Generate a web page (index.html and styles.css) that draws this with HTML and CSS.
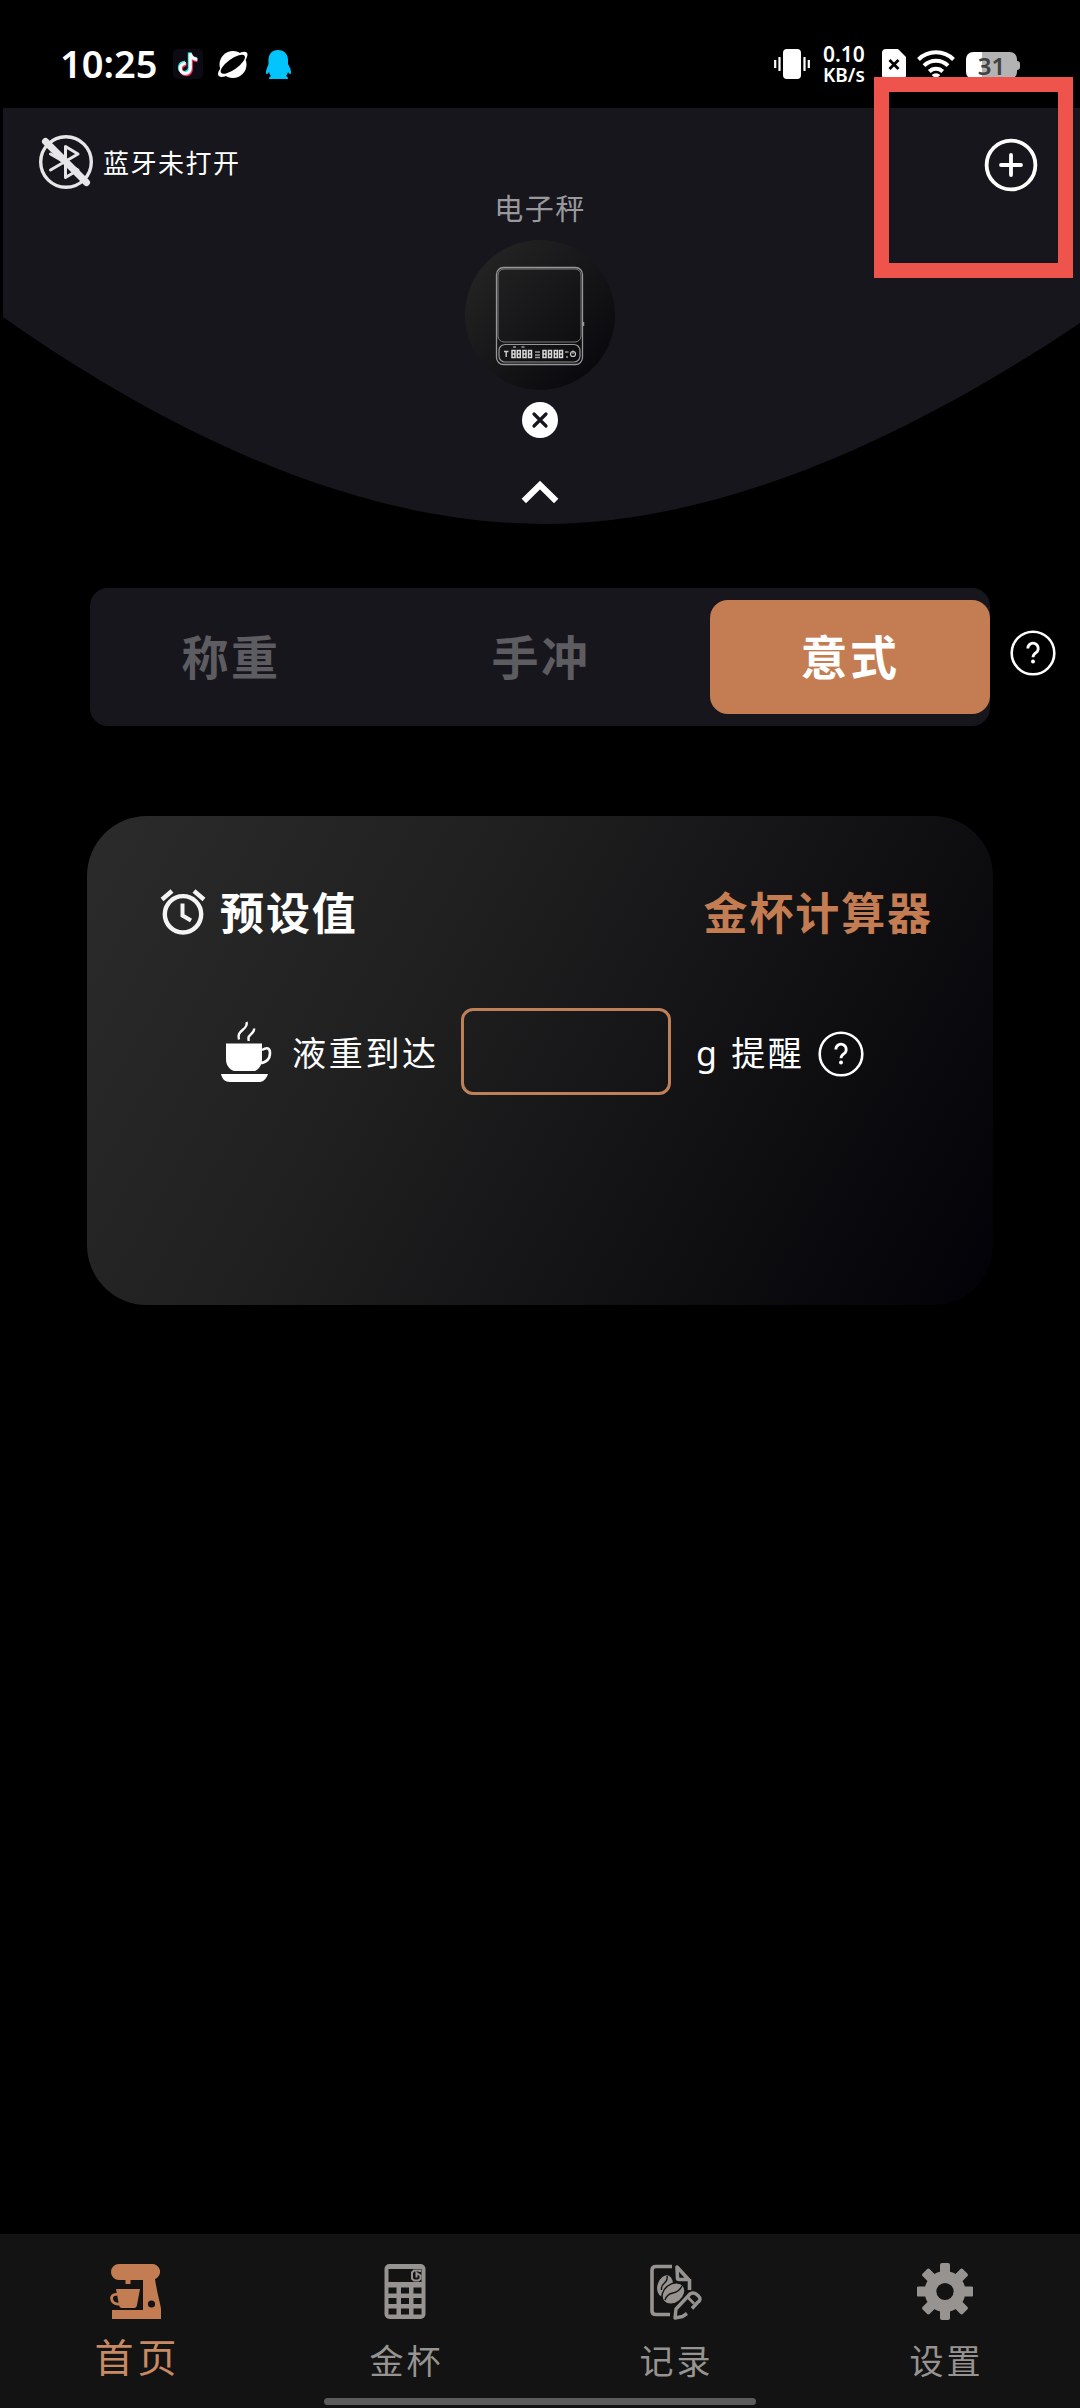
FILE: index.html
```html
<!DOCTYPE html>
<html lang="zh-CN">
<head>
<meta charset="UTF-8">
<title>电子秤</title>
<link rel="stylesheet" href="styles.css">
</head>
<body>
<div class="screen">
  <div class="status">
    <div class="status-left">
      <span class="clock">10:25</span>
      <svg class="app-icon" width="30" height="30" viewBox="0 0 30 30"><rect width="30" height="30" rx="5" fill="#0c0b14"/><g fill="none" stroke-width="3.6"><path d="M12 13.5a5 5 0 1 0 4.6 5V3.5c.6 3.800 3 6 7 6.400" stroke="#25e6e0"/><path d="M13.500 15.500a5 5 0 1 0 4.600 4.500V5.500c.6 3.800 3 5.500 6.400 6" stroke="#f5325b"/><path d="M12.700 14.500a5 5 0 1 0 4.600 5V4.500c.6 3.800 3 5.500 7 6" stroke="#fff" stroke-width="3"/></g></svg>
      <svg class="planet" width="32" height="30" viewBox="0 0 32 30"><circle cx="16" cy="15.500" r="13.500" fill="#fff"/><path d="M21 5C26 1.500 31 2 30.500 6C30 9 28.500 11 27 13ZM11 26C6 29 .5 28.500 1 24.500C1.500 21.500 3 20 4.500 18Z" fill="#fff"/><ellipse cx="15.800" cy="15.200" rx="14.500" ry="5.300" transform="rotate(-36 15.800 15.200)" fill="#000"/></svg>
      <svg class="penguin" width="28" height="30" viewBox="0 0 28 30"><path fill="#00c4fb" d="M14 0c6 0 10 4 10 10v4l2 4c1 2.500 1.400 5 .6 6-.7.500-1.600-.4-2.600-2-.5 2-1.500 3.400-2 4 1.600.7 2 1.500 2 3H5c0-1.500.5-2.300 2-3-.8-.8-1.600-2-2-4-1 1.600-2 2.500-2.600 2-.8-1-.4-3.500.6-6l1.500-4v-4C4.500 4 8 0 14 0z"/></svg>
    </div>
    <div class="status-right">
      <svg class="vibrate" width="36" height="30" viewBox="0 0 36 30"><rect x="9" y="0" width="18" height="30" rx="4" fill="#fff"/><path d="M5.500 8v14M1.200 11v8M30.500 8v14M34.800 11v8" stroke="#fff" stroke-width="2.200"/></svg>
      <div class="speed"><span>0.10</span><span class="unit">KB/s</span></div>
      <svg class="sim" width="24" height="30" viewBox="0 0 24 30"><path d="M4 0h12l8 8v18a4 4 0 0 1-4 4H4a4 4 0 0 1-4-4V4a4 4 0 0 1 4-4z" fill="#fff"/><path d="M7.500 11l9 9M16.500 11l-9 9" stroke="#000" stroke-width="2.800"/></svg>
      <svg class="wifi" width="38" height="29" viewBox="0 0 38 29"><g fill="none" stroke="#fff" stroke-width="4"><path d="M1.500 9.500a25 25 0 0 1 35 0"/><path d="M7 15.700a17 17 0 0 1 24 0"/><path d="M12.300 21.500a9.500 9.500 0 0 1 13.400 0"/></g><path d="M14.700 25a6.200 6.200 0 0 1 8.600 0L19 29z" fill="#fff"/></svg>
      <div class="battery"><span>31</span></div>
    </div>
  </div>

  <header class="header">
    <svg class="header-bg" width="1080" height="420" viewBox="0 0 1080 420"><path d="M3 0H1080V215C870 356 690 416 545 416C395 416 215 358 3 209Z" fill="#17161c"/></svg>
    <div class="bluetooth">
      <svg width="54" height="54" viewBox="0 0 54 54"><g fill="none" stroke="#e6e6e8" stroke-linejoin="round" stroke-linecap="round"><circle cx="27" cy="27" r="25.300" stroke-width="3.400"/><path d="M11.500 35L39 19 26.500 11.500V42.500L39 35 11.500 19" stroke-width="3"/><path d="M6.500 6.500L47.500 47.500" stroke-width="7"/></g></svg>
      <span>蓝牙未打开</span>
    </div>
    <svg class="add" width="54" height="54" viewBox="0 0 54 54"><g fill="none" stroke="#fff" stroke-width="3.800" stroke-linecap="round"><circle cx="27" cy="27" r="24.400"/><path d="M27 17V37M17 27H37"/></g></svg>
    <div class="device">
      <span class="device-name">电子秤</span>
      <div class="device-pic">
        <svg width="90" height="100" viewBox="0 0 90 100"><g fill="none" stroke="#969698"><rect x="1.500" y="1.500" width="86" height="97" rx="7" stroke-width="1.300"/><rect x="3" y="3" width="83" height="73" rx="6" stroke-width=".8"/><rect x="4" y="78.500" width="81" height="17.500" rx="6" stroke-width="1.200"/></g><path d="M88.500 56v4" stroke="#969698" stroke-width="1.500"/><path d="M9 85.500h4.500M11.200 85.500V91" stroke="#ccc" stroke-width="1.400"/><g fill="none" stroke="#d8d8d8" stroke-width="1.500"><path d="M17 84.500h3v7h-3zM17 88h3M22.300 84.500h3v7h-3zM22.300 88h3M28 84.500h3v7h-3zM28 88h3M33.500 84.500h3v7h-3zM33.500 88h3M48 84.500h3v7h-3zM48 88h3M53.500 84.500h3v7h-3zM53.500 88h3M59.300 84.500h3v7h-3zM59.300 88h3M64.500 84.500h3v7h-3zM64.500 88h3"/></g><path d="M18 81h3M26.500 81h3M40 86h5M40 89h5M40 91.500h5M70 86h3.500M71 91h2" stroke="#999" stroke-width="1.300"/><circle cx="78" cy="88" r="2.500" fill="none" stroke="#ccc" stroke-width="1.200"/><path d="M78 84.500v3.500" stroke="#ccc"/></svg>
      </div>
      <svg class="device-x" width="36" height="36" viewBox="0 0 36 36"><circle cx="18" cy="18" r="18" fill="#fff"/><path d="M12 12L24 24M24 12L12 24" stroke="#17161c" stroke-width="3.200" stroke-linecap="round"/></svg>
      <svg class="chevron" width="38" height="24" viewBox="0 0 38 24"><path d="M2.800 21L19 5 35.200 21" fill="none" stroke="#fff" stroke-width="6.200"/></svg>
    </div>
  </header>

  <div class="modes">
    <div class="tabs"><span class="tab">称重</span><span class="tab">手冲</span><span class="tab active">意式</span></div>
    <svg class="help" width="46" height="46" viewBox="0 0 46 46"><g fill="none" stroke="#fff"><circle cx="23" cy="23" r="21.300" stroke-width="2.600"/><path d="M17.800 18.500a5.200 5.200 0 1 1 8.200 4.200c-2 1.400-3 2.300-3 4.600" stroke-width="2.800"/></g><circle cx="23" cy="31.500" r="2" fill="#fff"/></svg>
  </div>

  <main class="card">
    <div class="card-head">
      <svg width="46" height="46" viewBox="0 0 46 46"><g fill="none" stroke="#f4f4f4"><circle cx="23" cy="25.300" r="18.200" stroke-width="4.400"/><path d="M2 10.500L12 2M34 2L44 10.500" stroke-width="4.400"/><path d="M22.500 14.500V26.500L31 31.500" stroke-width="4"/></g></svg>
      <h1>预设值</h1>
      <a class="calc">金杯计算器</a>
    </div>
    <div class="card-row">
      <svg class="cup" width="52" height="62" viewBox="0 0 52 62"><path d="M6 22.500H42V38c0 6-3 10-7 12H14C9 48 6 44 6 38ZM1 53H48C46 58.500 43 61 39 61H10C5 61 2 58 1 53Z" fill="#fff"/><path d="M42 29c5-3 8-2 8 3 0 6-4 10-10 10" fill="none" stroke="#fff" stroke-width="2.600"/><path d="M26.500 1c2 6-6 8-7.500 12-.8 2-.4 4 0 5.500M34 7.500c1 4-5 6-5.500 9-.2 1.200 0 2.200.3 3.500" fill="none" stroke="#fff" stroke-width="2.400"/></svg>
      <span class="reach">液重到达</span>
      <div class="field"></div>
      <span class="remind">g 提醒</span>
      <svg class="row-help" width="46" height="46" viewBox="0 0 46 46"><g fill="none" stroke="#fff"><circle cx="23" cy="23" r="21.300" stroke-width="2.600"/><path d="M17.800 18.500a5.200 5.200 0 1 1 8.200 4.200c-2 1.400-3 2.300-3 4.600" stroke-width="2.800"/></g><circle cx="23" cy="31.500" r="2" fill="#fff"/></svg>
    </div>
  </main>

  <nav class="nav">
    <div class="nav-item on">
      <svg width="56" height="60" viewBox="0 0 56 60"><g fill="#c47d52"><path d="M12 2H44a7.800 7.800 0 0 1 4 15C50 31 54 44 54 47V57H5V48H36V18H12A8 8 0 0 1 12 2ZM18.500 18H23.500V22H18.500Z"/><path d="M9 27H33L30 43Q29.500 46 27 46H15Q12.500 46 12 43Z"/></g><path d="M10 32.500C2 31 3 43 12 42" fill="none" stroke="#c47d52" stroke-width="2.800"/><circle cx="44.500" cy="42" r="3.600" fill="#131313"/></svg>
      <span>首页</span>
    </div>
    <div class="nav-item">
      <svg width="56" height="60" viewBox="0 0 56 60"><rect x="7.500" y="2" width="41" height="55" rx="5" fill="#969391"/><path d="M11.500 7H44.500V20H11.500ZM11.500 25.500h8v6h-8zM24 25.500h8v6h-8zM36.500 25.500h8v6h-8zM11.500 36h8v6h-8zM24 36h8v6h-8zM36.500 36h8v6h-8zM11.500 46.500h8v6h-8zM24 46.500h8v6h-8zM36.500 46.500h8v6h-8z" fill="#131313"/><path d="M43 10V8.500H37L35 10.500V16.500L37 18.500H41.500L43.500 16.500V13.500L39.500 11V15.500" fill="none" stroke="#969391" stroke-width="2"/></svg>
      <span>金杯</span>
    </div>
    <div class="nav-item">
      <svg width="56" height="60" viewBox="0 0 56 60"><g fill="none" stroke="#969391" stroke-width="3.600" stroke-linejoin="round"><path d="M25 4.500H9Q5 4.500 5 8V49Q5 52.500 9 52.500H23"/><path d="M30 5L41.500 17.500H32Q30.500 17.500 30.500 16ZM42.500 17V28" stroke-width="3.600"/><path d="M40 51.500L35.500 54.500 28 56 29 47 43 32Q47 29.500 51 33.500T51 40L45 46.500" stroke-width="3.400"/><path d="M40.500 35L47 41.500" stroke-width="2.600"/></g><g fill="#969391"><ellipse cx="18" cy="24" rx="7.500" ry="11" transform="rotate(18 18 24)"/><ellipse cx="26.500" cy="31.500" rx="12.500" ry="9.500" transform="rotate(-38 26.500 31.500)" stroke="#131313" stroke-width="1.500"/></g><path d="M18 38Q20 32 26 31T35 24M14.500 28Q14 24 17.500 21T20 14" fill="none" stroke="#131313" stroke-width="1.400"/></svg>
      <span>记录</span>
    </div>
    <div class="nav-item">
      <svg width="56" height="60" viewBox="0 0 56 60"><g fill="#969391"><circle cx="28" cy="29.500" r="20.500"/><rect x="23" y="1" width="10" height="57" rx="2"/><rect x="23" y="1" width="10" height="57" rx="2" transform="rotate(45 28 29.500)"/><rect x="23" y="1" width="10" height="57" rx="2" transform="rotate(90 28 29.500)"/><rect x="23" y="1" width="10" height="57" rx="2" transform="rotate(135 28 29.500)"/></g><circle cx="28" cy="29.500" r="8.600" fill="#131313"/></svg>
      <span>设置</span>
    </div>
    <div class="home-bar"></div>
  </nav>
  <div class="highlight"></div>
</div>
</body>
</html>
```
FILE: styles.css
```css
* { box-sizing: border-box; }
body {
  margin: 0;
  background: #000;
  color: #fff;
  font-family: "Noto Sans", "Noto Sans CJK SC", sans-serif;
}
svg { display: block; flex: none; }
.screen {
  position: relative;
  display: flex;
  flex-direction: column;
  width: 1080px;
  height: 2408px;
  overflow: hidden;
}

/* status bar */
.status {
  display: flex;
  justify-content: space-between;
  height: 108px;
  padding: 0 60px 0 60px;
}
.status-left, .status-right { display: flex; align-items: flex-start; }
.clock {
  width: 113px;
  margin-top: 41px;
  font-size: 38px;
  line-height: 44px;
  font-weight: 600;
  white-space: nowrap;
}
.app-icon { margin-top: 49px; }
.planet { margin: 49px 0 0 14px; }
.penguin { margin: 50px 0 0 15px; }
.vibrate { margin: 49px 0 0; }
.speed {
  display: flex;
  flex-direction: column;
  width: 46px;
  margin: 43px 0 0 13px;
  font-size: 21px;
  line-height: 22px;
  font-weight: 600;
  white-space: nowrap;
}
.speed .unit { font-size: 19px; line-height: 20px; }
.sim { margin: 49px 0 0 13px; }
.wifi { margin: 50px 0 0 11px; }
.battery {
  position: relative;
  width: 51px;
  height: 27px;
  margin: 52px 3px 0 11px;
  border-radius: 7px;
  background: linear-gradient(90deg, #fff 16px, #b3b3b3 16px);
  color: #414141;
  font-size: 24px;
  line-height: 28px;
  font-weight: 600;
  text-align: center;
}
.battery::after {
  content: "";
  position: absolute;
  left: 51px;
  top: 9px;
  width: 3px;
  height: 9px;
  border-radius: 0 3px 3px 0;
  background: #b3b3b3;
}

/* header */
.header { position: relative; display: flex; height: 420px; }
.header-bg { position: absolute; left: 0; top: 0; }
.bluetooth {
  position: relative;
  display: flex;
  gap: 10px;
  width: 400px;
  height: 54px;
  margin: 27px 0 0 39px;
  font-size: 26px;
  line-height: 57px;
  letter-spacing: 1.5px;
}
.device {
  position: relative;
  display: flex;
  flex-direction: column;
  align-items: center;
  width: 202px;
  padding-top: 80px;
}
.device-name {
  height: 40px;
  color: #99999c;
  font-size: 29px;
  line-height: 41px;
  letter-spacing: 1.5px;
}
.device-pic {
  width: 150px;
  height: 150px;
  margin-top: 12px;
  padding: 26px 30px;
  border-radius: 50%;
  background: linear-gradient(135deg, #242424 10%, #050409 100%);
}
.device-x { margin-top: 12px; }
.chevron { margin-top: 42px; }
.add { position: relative; order: 3; margin: 30px 0 0 343px; }

/* mode switch */
.modes { display: flex; height: 138px; margin: 60px 0 0 90px; }
.tabs {
  display: flex;
  align-items: center;
  width: 900px;
  border-radius: 18px;
  background: #17161c;
}
.tab {
  flex: 1 0 0;
  height: 114px;
  color: #5d5c61;
  font-size: 47px;
  line-height: 114px;
  font-weight: 700;
  letter-spacing: 2.400px;
  text-align: center;
}
.tab:first-child { flex: 0 0 282px; }
.tab.active { flex: 0 0 280px; border-radius: 18px; background: #c47d52; color: #fff; }
.help { margin: 42px 0 0 20px; }

/* preset card */
.card {
  width: 906px;
  height: 489px;
  margin: 90px 0 0 87px;
  padding: 70px 60px 0 73px;
  border-radius: 60px;
  background: linear-gradient(120deg, #2b2b2b 0%, #202021 35%, #101012 70%, #020107 100%);
}
.card-head { display: flex; align-items: center; height: 54px; }
.card-head svg { margin-bottom: 2px; }
.card-head h1, .calc {
  margin: 0 0 0 14px;
  font-size: 44px;
  line-height: 54px;
  font-weight: 700;
  letter-spacing: 1.900px;
}
.card-head .calc { margin-left: auto; color: #c47d52; }
.card-row {
  display: flex;
  align-items: center;
  height: 87px;
  margin: 68px 0 0 60px;
  font-size: 34px;
  letter-spacing: 2.700px;
  white-space: nowrap;
}
.reach { width: 148px; margin: 0 21px 0 20px; }
.field { width: 210px; height: 87px; border: 3px solid #bd8059; border-radius: 12px; }
.remind { width: 109px; margin: 0 13px 0 25px; }
.row-help { margin-top: 4px; }

/* bottom navigation */
.nav {
  position: relative;
  display: flex;
  height: 174px;
  margin-top: auto;
  background: #131313;
}
.nav-item {
  display: flex;
  flex-direction: column;
  align-items: center;
  width: 270px;
  padding-top: 28px;
  color: #969391;
  font-size: 34px;
  line-height: 50px;
  letter-spacing: 3px;
}
.nav-item span { margin: 14px 0 0 3px; }
.nav-item.on { color: #c88a63; font-size: 39px; letter-spacing: 4px; }
.nav-item.on span { margin: 10px 0 0 5px; }
.home-bar {
  position: absolute;
  left: 324px;
  top: 164px;
  width: 432px;
  height: 7px;
  border-radius: 4px;
  background: #5c5c5c;
}

/* callout frame over the add button */
.highlight {
  position: absolute;
  left: 874px;
  top: 77px;
  width: 199px;
  height: 201px;
  border: 15px solid #ee534c;
}
```
